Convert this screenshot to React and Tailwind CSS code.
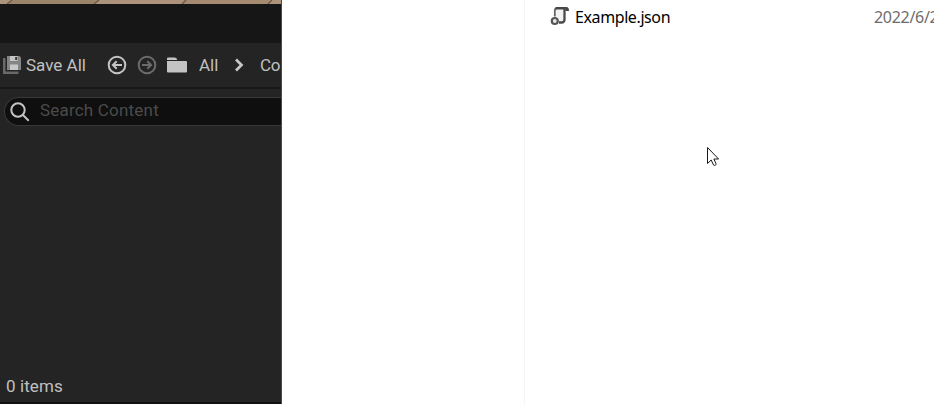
import React from 'react';

function SaveIcon() {
  return (
    <svg className="block h-[20px] w-[20px] shrink-0" viewBox="0 0 20 20">
      <path d="M0 3h2.500v13.500H15.500V19H0z" fill="#696969" />
      <path d="M4 1h12.500L18 2.500V15H4z" fill="#858585" />
      <path d="M7 1h7.500v5H7z" fill="#c4c4c4" />
      <path d="M12.200 2h1.800v3h-1.800z" fill="#333" />
      <path d="M7 9.500h8V15H7z" fill="#c8c8c8" />
    </svg>
  );
}

function ArrowCircle({ flip, color }) {
  return (
    <svg className="block h-[20px] w-[20px] shrink-0" viewBox="0 0 20 20" fill="none" stroke={color} strokeWidth="2">
      <circle cx="10" cy="10" r="8.300" />
      <path d={flip ? 'M5 10h9M10.300 6.200 14.100 10l-3.800 3.800' : 'M15 10H6M9.700 6.200 5.900 10l3.800 3.800'} />
    </svg>
  );
}

function Toolbar() {
  return (
    <div className="flex h-[44px] shrink-0 items-center overflow-hidden whitespace-nowrap bg-[#242424] pl-[3px] text-[17px] text-[#c0c0c0]">
      <SaveIcon />
      <span className="ml-[3px] w-[81px] shrink-0 pt-[2px]">Save All</span>
      <ArrowCircle color="#c4c4c4" />
      <span className="ml-[10px]"><ArrowCircle flip color="#6b6b6b" /></span>
      <svg className="ml-[10px] block h-[16px] w-[20px] shrink-0" viewBox="0 0 20 16" fill="#c4c4c4">
        <path d="M0 3V1.500Q0 .5 1 .5h6.500q1 0 1.700.8l1.200 1.700z" />
        <path d="M0 4h19q1 0 1 1v9.500q0 1-1 1H1q-1 0-1-1z" />
      </svg>
      <span className="ml-[12px] w-[36px] shrink-0 pt-[2px]">All</span>
      <svg className="block h-[14px] w-[9px] shrink-0" viewBox="0 0 9 14" fill="none" stroke="#c8c8c8" strokeWidth="2.700">
        <path d="M1 1.500 6.500 7 1 12.500" />
      </svg>
      <span className="ml-[16px] shrink-0 pt-[2px] tracking-[-0.3px]">Co</span>
    </div>
  );
}

function ContentBrowser() {
  return (
    <aside className="flex h-full w-[282px] shrink-0 flex-col overflow-hidden border-r border-[#4a4a4a] bg-[#242424] font-['Roboto',sans-serif]">
      <svg className="block h-[4px] w-full shrink-0" viewBox="0 0 281 4" preserveAspectRatio="none">
        <path d="M0 0h281v4H0z" fill="#ad937b" />
        <path d="M12 0h87l-5 4H7z" fill="#9b846a" />
        <path d="M186 0h86l-4 4h-86z" fill="#a58b70" />
        <path d="M12 0 7 4M99 0l-5 4M186 0l-4 4M272 0l-4 4" stroke="#665849" strokeWidth="1.200" />
      </svg>
      <div className="h-[39px] shrink-0 bg-[#161616]" />
      <Toolbar />
      <div className="h-[2px] shrink-0 bg-[#181818]" />
      <div className="mt-[8px] ml-[4px] flex h-[29px] shrink-0 items-center rounded-l-full border-y-[1.500px] border-l-[1.500px] border-[#383838] bg-[#0f0f0f] pl-[5px]">
        <svg className="mt-[1px] block h-[20px] w-[20px] shrink-0" viewBox="0 0 20 20" fill="none" stroke="#c4c4c4" strokeWidth="2">
          <circle cx="8" cy="8" r="6.700" />
          <path d="m12.700 12.700 6 6" />
        </svg>
        <span className="ml-[10px] pb-[1px] text-[17px] tracking-[0.2px] text-[#4b4b4b]">Search Content</span>
      </div>
      <div className="flex-1" />
      <div className="flex h-[32px] shrink-0 items-center pt-[2px] pl-[6px] text-[17px] tracking-[0.1px] text-[#c0c0c0]">0 items</div>
      <div className="h-[2px] shrink-0 bg-[#131013]" />
    </aside>
  );
}

function ScriptIcon() {
  return (
    <svg className="block h-[20px] w-[20px] shrink-0" viewBox="0 0 20 20" fill="none">
      <path d="M5 3h9.500v13H5z" fill="#f2f2f2" />
      <path d="M4.800 10.500V5Q4.800 2 7 2" stroke="#666" strokeWidth="1.800" />
      <path d="M14.500 3v10.500q0 3-3 3H9" stroke="#4a4a4a" strokeWidth="2.300" />
      <path d="M6 1h10.500q2.500 0 2.500 4h-3.500V3.500H5z" fill="#484848" />
      <circle cx="4.800" cy="15" r="3" fill="#e8e8e8" stroke="#555" strokeWidth="2.200" />
    </svg>
  );
}

function FileExplorer() {
  return (
    <main className="flex min-w-0 flex-1 bg-white font-['Noto_Sans','Open_Sans',sans-serif]">
      <div className="w-[243px] shrink-0 border-r border-[#f5f5f5]" />
      <div className="flex h-[34px] min-w-0 flex-1 items-center overflow-hidden whitespace-nowrap pl-[25px] text-[16px]">
        <span className="mb-[2px]"><ScriptIcon /></span>
        <span className="ml-[5px] w-[299px] shrink-0 tracking-[-0.400px] text-black">Example.json</span>
        <span className="shrink-0 tracking-[-0.300px] text-[#6d6d6d]">2022/6/2</span>
      </div>
    </main>
  );
}

export default function App() {
  return (
    <div className="relative flex h-[404px] w-[934px] overflow-hidden bg-white">
      <ContentBrowser />
      <FileExplorer />
      <svg className="absolute top-[146px] left-[706px] h-[21px] w-[14px]" viewBox="0 0 14 21">
        <path d="M1.500 1.500v16l3.700-3.500 2.300 5q.3.700 1 .4l1.200-.5q.7-.3.400-1L7.900 13h4.700z" fill="white" stroke="#17171f" strokeWidth="1" />
      </svg>
    </div>
  );
}
